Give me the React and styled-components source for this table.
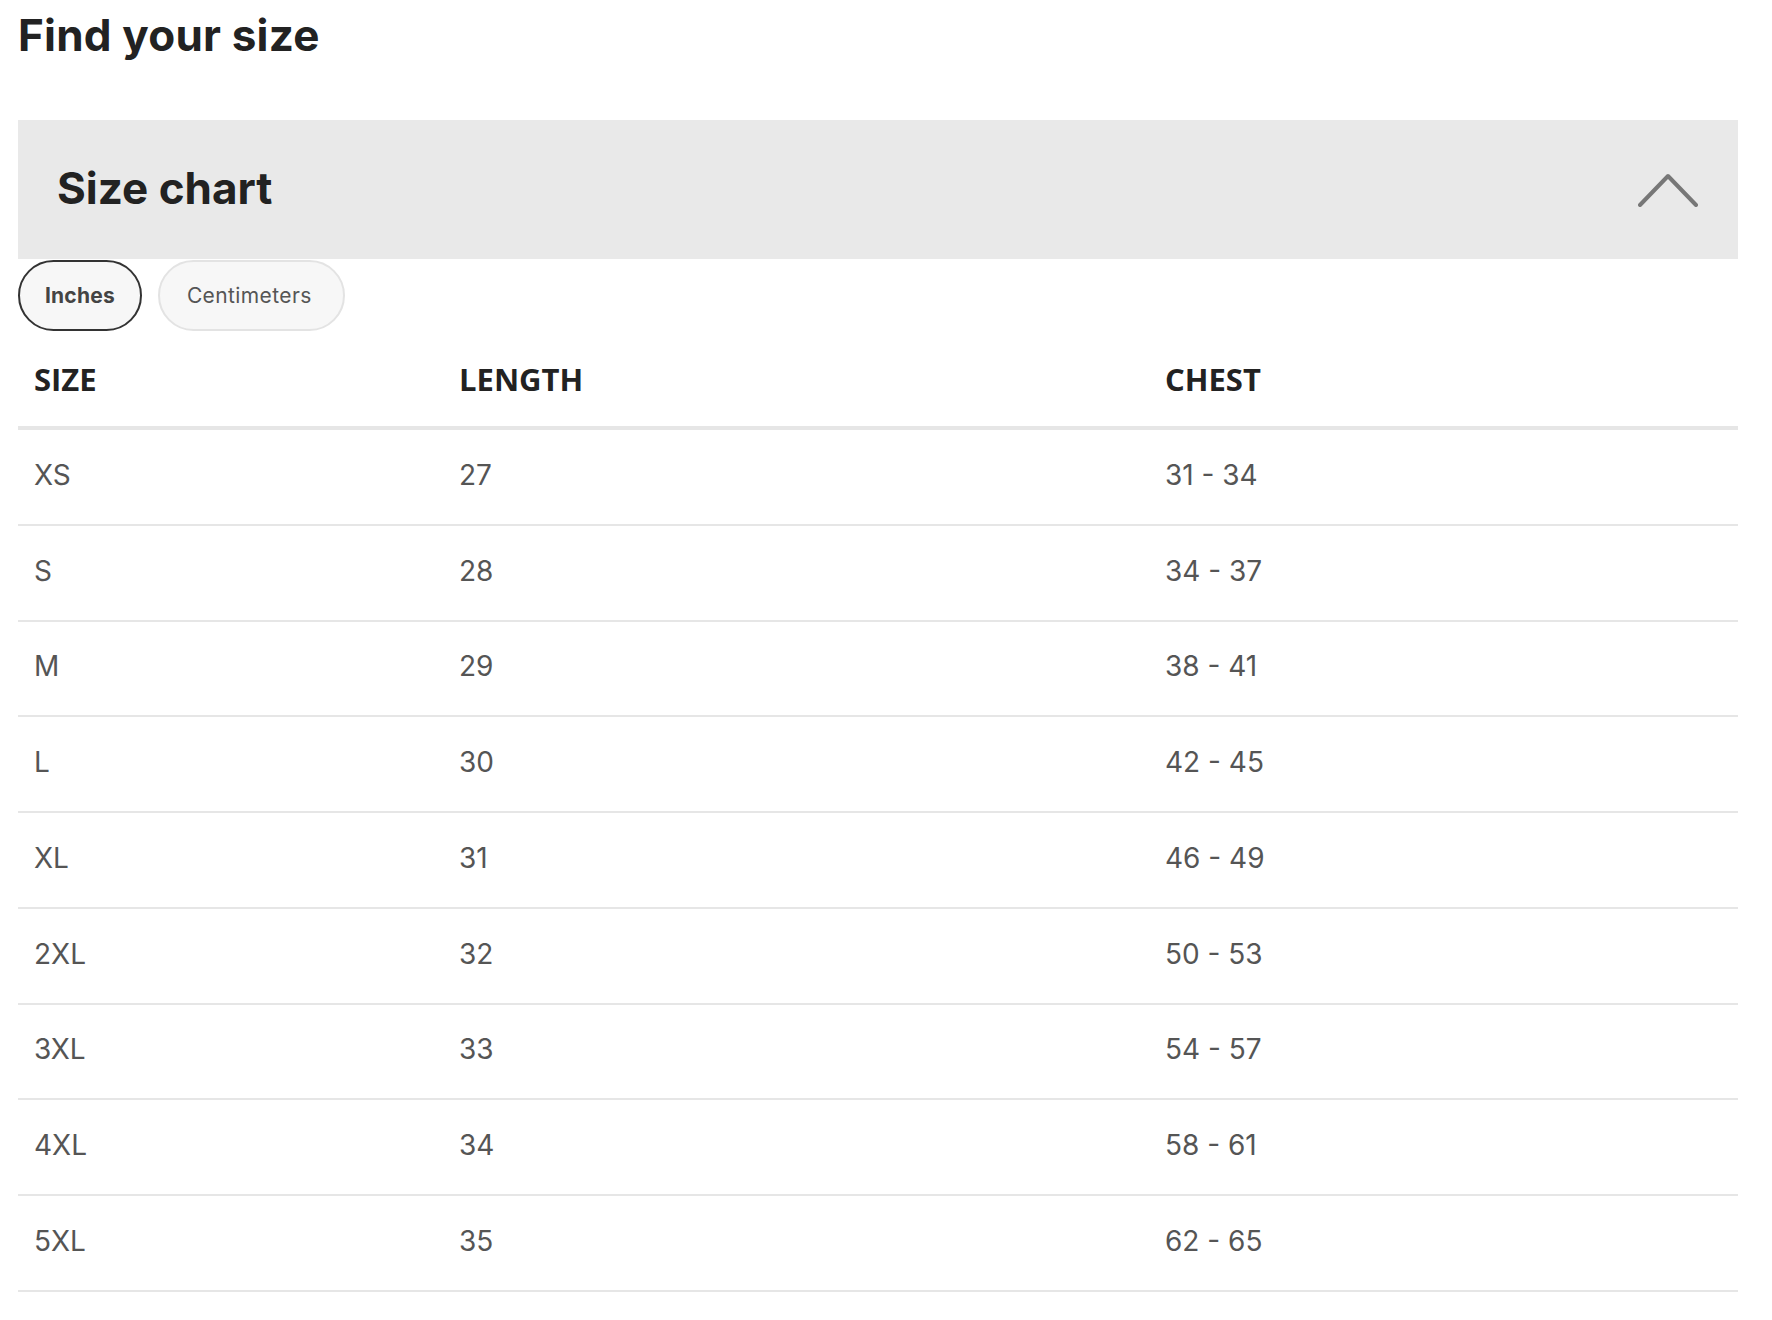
import React, { useState } from 'react';
import styled, { createGlobalStyle } from 'styled-components';

const GlobalStyle = createGlobalStyle`
  body {
    margin: 0;
    background: #fff;
    font-family: Inter, "Liberation Sans", sans-serif;
  }
`

const Page = styled.div`
    padding: 9px 34px 0 18px;
`
const Heading = styled.h2`
    margin: 0;
    font-size: 44px;
    line-height: 53px;
    font-weight: 700;
    color: #222;
    letter-spacing: 0.2px;
`
const Panel = styled.div`
    margin-top: 58px;
    height: 139px;
    background: #e9e9e9;
    display: flex;
    align-items: center;
    justify-content: space-between;
    padding: 0 40px 4px 39px;
    box-sizing: border-box;
`
const PanelTitle = styled.h3`
    margin: 0;
    font-size: 44px;
    font-weight: 700;
    color: #222;
`
const Toggle = styled.button`
    background: transparent;
    border: none;
    padding: 4px 0 0;
    display: flex;
    cursor: pointer;
`
const Units = styled.div`
    display: flex;
    gap: 16px;
    margin-top: 1px;
`
const Pill = styled.button`
    height: 71px;
    padding: ${props => props.active ? '0 25px' : '0 31px 0 27px'};
    border-radius: 36px;
    box-sizing: border-box;
    background: #f7f7f7;
    border: 2px solid ${props => props.active ? '#333' : '#e3e3e3'};
    color: ${props => props.active ? '#444' : '#555'};
    font-family: Inter, "Liberation Sans", sans-serif;
    font-size: 21px;
    letter-spacing: ${props => props.active ? '0.2px' : '0.4px'};
    font-weight: ${props => props.active ? 700 : 400};
    cursor: pointer;
`
const Row = styled.div`
    display: grid;
    grid-template-columns: 425px 706px 1fr;
    align-items: center;
    box-sizing: border-box;
    height: ${props => props.head ? '99px' : '95.75px'};
    border-bottom: ${props => props.head ? '4px' : '2px'} solid #e6e6e6;
`
const HeadCell = styled.div`
    padding: 0 16px;
    font-family: "Open Sans", "Liberation Sans", sans-serif;
    font-size: 31px;
    font-weight: 700;
    color: #222;
`
const Cell = styled.div`
    padding: 0 16px 4px;
    font-size: 28px;
    color: #555;
`

const rows = {
  in: [
    ['XS', '27', '31 - 34'],
    ['S', '28', '34 - 37'],
    ['M', '29', '38 - 41'],
    ['L', '30', '42 - 45'],
    ['XL', '31', '46 - 49'],
    ['2XL', '32', '50 - 53'],
    ['3XL', '33', '54 - 57'],
    ['4XL', '34', '58 - 61'],
    ['5XL', '35', '62 - 65'],
  ],
  cm: [
    ['XS', '69', '79 - 86'],
    ['S', '71', '86 - 94'],
    ['M', '74', '97 - 104'],
    ['L', '76', '107 - 114'],
    ['XL', '79', '117 - 124'],
    ['2XL', '81', '127 - 135'],
    ['3XL', '84', '137 - 145'],
    ['4XL', '86', '147 - 155'],
    ['5XL', '89', '157 - 165'],
  ],
}

const Chevron = ({ open }) => (
  <svg width="60" height="34" viewBox="0 0 60 34" style={{ transform: open ? 'none' : 'rotate(180deg)' }}>
    <path d="M2 32 L30 3 L58 32" fill="none" stroke="#777" strokeWidth="4" strokeLinecap="round" strokeLinejoin="round" />
  </svg>
)

export default function App() {
  const [unit, setUnit] = useState('in');
  const [open, setOpen] = useState(true);

  return (
    <Page>
      <GlobalStyle />
      <Heading>Find your size</Heading>
      <Panel>
        <PanelTitle>Size chart</PanelTitle>
        <Toggle onClick={() => setOpen(!open)}>
          <Chevron open={open} />
        </Toggle>
      </Panel>
      {open && <>
        <Units>
          <Pill active={unit === 'in'} onClick={() => setUnit('in')}>Inches</Pill>
          <Pill active={unit === 'cm'} onClick={() => setUnit('cm')}>Centimeters</Pill>
        </Units>
        <Row head>
          <HeadCell>SIZE</HeadCell>
          <HeadCell>LENGTH</HeadCell>
          <HeadCell>CHEST</HeadCell>
        </Row>
        {rows[unit].map(r => (
          <Row key={r[0]}>
            <Cell>{r[0]}</Cell>
            <Cell>{r[1]}</Cell>
            <Cell>{r[2]}</Cell>
          </Row>
        ))}
      </>}
    </Page>
  )
}
